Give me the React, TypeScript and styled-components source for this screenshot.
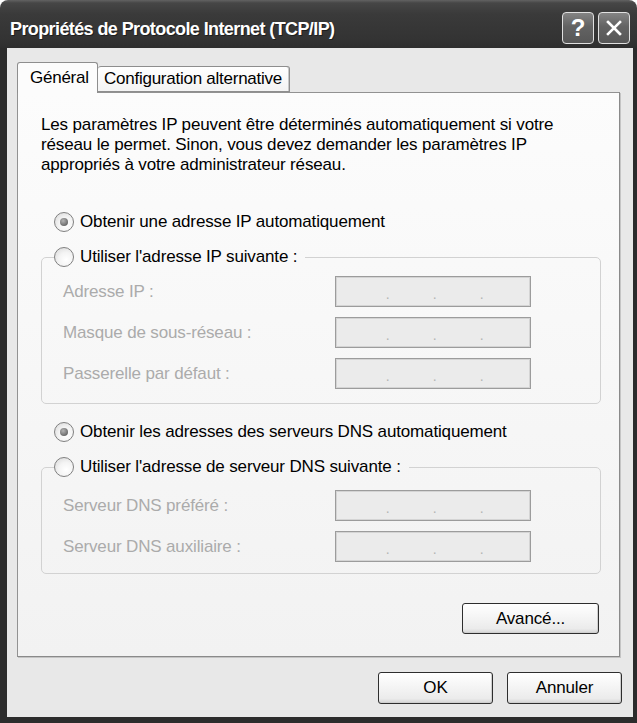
import React from 'react'
import styled, { createGlobalStyle } from 'styled-components'

const UI_FONT = `"Liberation Sans", Arial, sans-serif`

const GlobalStyle = createGlobalStyle`
  * { box-sizing: border-box; }
  html, body { margin: 0; padding: 0; background: #ffffff; }
  body { font-family: ${UI_FONT}; font-size: 17px; letter-spacing: -0.15px; color: #000; }
`

const Window = styled.div`
  width: 637px;
  height: 723px;
  display: flex;
  flex-direction: column;
`

const TitleBar = styled.div`
  height: 48px;
  flex: none;
  display: flex;
  align-items: center;
  padding: 10px 7px 0 10px;
  border-radius: 8px 8px 0 0;
  background: linear-gradient(#626262 0, #464646 3px, #3a3a3a 14px, #333333 40px, #2e2e2e 100%);
`

const Title = styled.div`
  flex: 1;
  color: #ffffff;
  font-weight: bold;
  font-size: 18px;
  letter-spacing: -0.6px;
  text-shadow: 1px 1px 0 #1e1e1e;
  white-space: nowrap;
`

const CaptionButtons = styled.div`
  display: flex;
  gap: 4px;
  margin-top: -3px;
`

const CaptionButton = styled.div`
  width: 32px;
  height: 32px;
  display: flex;
  align-items: center;
  justify-content: center;
  border: 1.5px solid #e0e0e0;
  border-radius: 4px;
  background: linear-gradient(#848484, #636363 45%, #575757);
  color: #ffffff;
  font-weight: bold;
  font-size: 24px;
  letter-spacing: 0;
  line-height: 1;
`

const Frame = styled.div`
  flex: 1;
  display: flex;
  flex-direction: column;
  background: #e8e8e8;
  border-style: solid;
  border-color: #2c2c2c;
  border-width: 0 4px 6px 7px;
  padding: 14px 11px 13px 10px;
`

const TabStrip = styled.div`
  height: 30px;
  display: flex;
  align-items: flex-end;
  position: relative;
  z-index: 1;
`

const Tab = styled.div<{ $active?: boolean; $width: number }>`
  width: ${p => p.$width}px;
  height: ${p => (p.$active ? '31px' : '26px')};
  margin-bottom: ${p => (p.$active ? '-1px' : '0')};
  padding-left: ${p => (p.$active ? '12px' : '6px')};
  display: flex;
  align-items: center;
  border: 1px solid #8e8e8e;
  border-bottom: ${p => (p.$active ? 'none' : '1px solid #8e8e8e')};
  border-left: ${p => (p.$active ? '1px solid #8e8e8e' : 'none')};
  border-radius: 3px 3px 0 0;
  background: ${p => (p.$active ? '#fcfcfc' : 'linear-gradient(#ffffff, #f3f3f3)')};
  box-shadow: ${p => (p.$active ? 'none' : 'inset -1px 0 0 #c8c8c8')};
  letter-spacing: -0.25px;
  white-space: nowrap;
`

const Panel = styled.div`
  margin-right: 2px;
  display: flex;
  flex-direction: column;
  padding: 22px 0 22px 0;
  border: 1px solid #929292;
  border-right-color: #8a8a8a;
  border-bottom-color: #8a8a8a;
  box-shadow: 1px 1px 0 #c4c4c4;
  background: linear-gradient(#fcfcfc, #f2f2f2);
`

const Intro = styled.p`
  margin: 0 0 36px 23px;
  line-height: 20px;
  white-space: nowrap;
`

const RadioRow = styled.div<{ $gap?: number; $top?: number }>`
  height: 22px;
  display: flex;
  align-items: center;
  gap: 6px;
  padding-left: 36px;
  margin-top: ${p => p.$top ?? 0}px;
  margin-bottom: ${p => p.$gap ?? 0}px;
`

const RadioMark = styled.span<{ $checked?: boolean }>`
  width: 20px;
  height: 20px;
  flex: none;
  display: flex;
  align-items: center;
  justify-content: center;
  border-radius: 50%;
  border: 1px solid #808080;
  background: radial-gradient(circle at 62% 65%, #ffffff 0, #f4f4f4 45%, #d4d4d4 100%);

  &::after {
    content: '';
    display: ${p => (p.$checked ? 'block' : 'none')};
    width: 8px;
    height: 8px;
    border-radius: 50%;
    background: radial-gradient(circle at 40% 35%, #b4b4b4, #626262 80%);
  }
`

const Group = styled.fieldset<{ $padTop: number; $padBottom: number }>`
  margin: 0 18px 0 23px;
  padding: ${p => p.$padTop}px 0 ${p => p.$padBottom}px 0;
  border: 1px solid #d2d2d2;
  border-radius: 5px;
  min-width: 0;
`

const GroupLegend = styled.legend`
  margin-left: 12px;
  padding: 0 8px 0 0;
  height: 22px;
  display: flex;
  align-items: center;
  gap: 6px;
`

const FieldGrid = styled.div`
  display: grid;
  grid-template-columns: 272px 196px;
  row-gap: 10px;
  align-items: center;
  padding-left: 21px;
`

const FieldLabel = styled.span`
  color: #ababab;
`

const IpField = styled.div`
  width: 196px;
  height: 31px;
  display: flex;
  padding-left: 6px;
  border: 1px solid #9c9c9c;
  box-shadow: inset 0 0 0 1px #d4d4d4;
  background: #ebebeb;
`

const Octet = styled.span`
  width: 44px;
`

const Dot = styled.span`
  width: 3px;
  display: flex;
  justify-content: center;
  padding-top: 9px;
  color: #b4b4b4;
  font-size: 14px;
`

const PushButton = styled.button<{ $width: number; $height?: number }>`
  width: ${p => p.$width}px;
  height: ${p => p.$height ?? 32}px;
  padding: 0;
  border: 1px solid #2e2e2e;
  border-radius: 3px;
  background: linear-gradient(#ffffff, #f6f6f6 40%, #ebebeb 85%, #d4d4d4);
  box-shadow: inset -1px -1px 0 #cfcfcf;
  font-family: ${UI_FONT};
  font-size: 17px;
  letter-spacing: -0.15px;
  color: #000;
`

const PanelFooter = styled.div`
  display: flex;
  justify-content: flex-end;
  margin: 29px 20px 0 0;
`

const DialogButtons = styled.div`
  display: flex;
  justify-content: flex-end;
  gap: 14px;
  margin-top: 15px;
`

const ipFields = ['Adresse IP :', 'Masque de sous-réseau :', 'Passerelle par défaut :']
const dnsFields = ['Serveur DNS préféré :', 'Serveur DNS auxiliaire :']

function AddressBox() {
  return (
    <IpField>
      <Octet />
      <Dot>.</Dot>
      <Octet />
      <Dot>.</Dot>
      <Octet />
      <Dot>.</Dot>
      <Octet />
    </IpField>
  )
}

function Fields({ labels }: { labels: string[] }) {
  return (
    <FieldGrid>
      {labels.map(l => (
        <React.Fragment key={l}>
          <FieldLabel>{l}</FieldLabel>
          <AddressBox />
        </React.Fragment>
      ))}
    </FieldGrid>
  )
}

function App() {
  return (
    <Window>
      <GlobalStyle />
      <TitleBar>
        <Title>Propriétés de Protocole Internet (TCP/IP)</Title>
        <CaptionButtons>
          <CaptionButton>?</CaptionButton>
          <CaptionButton>
            <svg width="18" height="18" viewBox="0 0 18 18">
              <path d="M3 3 L15 15 M15 3 L3 15" stroke="#ffffff" strokeWidth="2.6" strokeLinecap="square" />
            </svg>
          </CaptionButton>
        </CaptionButtons>
      </TitleBar>
      <Frame>
        <TabStrip>
          <Tab $active $width={81}>Général</Tab>
          <Tab $width={192}>Configuration alternative</Tab>
        </TabStrip>
        <Panel>
          <Intro>
            Les paramètres IP peuvent être déterminés automatiquement si votre
            <br />
            réseau le permet. Sinon, vous devez demander les paramètres IP
            <br />
            appropriés à votre administrateur réseau.
          </Intro>
          <RadioRow $gap={13}>
            <RadioMark $checked />
            <span>Obtenir une adresse IP automatiquement</span>
          </RadioRow>
          <Group $padTop={8} $padBottom={14}>
            <GroupLegend>
              <RadioMark />
              <span>Utiliser l'adresse IP suivante :</span>
            </GroupLegend>
            <Fields labels={ipFields} />
          </Group>
          <RadioRow $gap={13} $top={17}>
            <RadioMark $checked />
            <span>Obtenir les adresses des serveurs DNS automatiquement</span>
          </RadioRow>
          <Group $padTop={12} $padBottom={11}>
            <GroupLegend>
              <RadioMark />
              <span>Utiliser l'adresse de serveur DNS suivante :</span>
            </GroupLegend>
            <Fields labels={dnsFields} />
          </Group>
          <PanelFooter>
            <PushButton $width={137} $height={31}>Avancé...</PushButton>
          </PanelFooter>
        </Panel>
        <DialogButtons>
          <PushButton $width={115}>OK</PushButton>
          <PushButton $width={115}>Annuler</PushButton>
        </DialogButtons>
      </Frame>
    </Window>
  )
}

export default App
